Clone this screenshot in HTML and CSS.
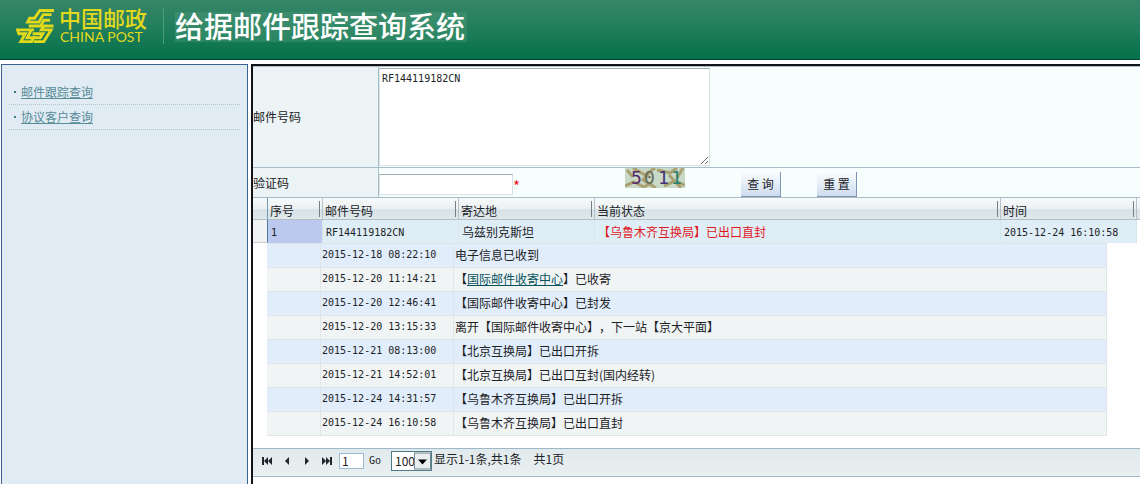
FILE: index.html
```html
<!DOCTYPE html>
<html lang="zh-CN">
<head>
<meta charset="utf-8">
<title>给据邮件跟踪查询系统</title>
<link rel="stylesheet" href="styles.css">
</head>
<body>
<header class="banner">
  <div class="brand">
    <svg class="brand-mark" viewBox="0 0 40 38" aria-hidden="true">
      <g fill="none" stroke="#e2d81c" stroke-width="3">
        <path d="M39 2.500H24.500L19 10.500H14L12 14.500H23.500L28 6.800H36.500"/>
        <path d="M13 18.500H25.500L28.500 12.500H35"/>
        <path d="M38.500 18.500H28.500L26 22.500H36L28.500 34.500H18"/>
        <path d="M18.500 22.500H1.500L3 26.500H9.500L5 34.500H16L18 30.500H11.500L15.500 23"/>
        <path d="M17 26.500H27.500L25 30.500H17"/>
      </g>
    </svg>
    <div class="brand-text">
      <span class="brand-cn">中国邮政</span>
      <span class="brand-en">CHINA POST</span>
    </div>
  </div>
  <h1 class="title">给据邮件跟踪查询系统</h1>
</header>

<div class="page">
  <nav class="sidebar">
    <ul class="menu">
      <li class="menu-item"><a href="#">邮件跟踪查询</a></li>
      <li class="menu-item"><a href="#">协议客户查询</a></li>
    </ul>
  </nav>

  <main class="main">
    <form class="query">
      <div class="query-row query-row-tall">
        <label class="query-label" for="mailno">邮件号码</label>
        <div class="query-field"><textarea class="mono mail-box" id="mailno">RF144119182CN</textarea></div>
      </div>
      <div class="query-row">
        <label class="query-label" for="code">验证码</label>
        <div class="query-field">
          <input class="code-box" id="code" type="text"><span class="required">*</span>
          <svg class="captcha" viewBox="0 0 60 20" role="img" aria-label="5011">
            <rect width="60" height="20" fill="#c9d9c8"/>
            <g fill="none" stroke="#aaa070" stroke-width="3">
              <path d="M8 0L20 7L30 0M24 5L18 12L31 20M0 18L9 14L19 19L27 14"/>
              <path d="M32 2L45 5L52 0M44 7L56 20M39 18L50 13L60 17M58 0L52 10M2 2L8 9"/>
            </g>
            <g class="captcha-text">
              <text x="6" y="16" fill="#552c68">5</text>
              <text x="19" y="16" fill="#626b58">0</text>
              <text x="33" y="16" fill="#443078">1</text>
              <text x="46" y="16" fill="#258474">1</text>
            </g>
          </svg>
          <button class="btn" type="button">查 询</button>
          <button class="btn btn-reset" type="reset">重 置</button>
        </div>
      </div>
    </form>

    <table class="grid">
      <colgroup><col class="c-handle"><col class="c-no"><col class="c-mail"><col class="c-dest"><col class="c-state"><col class="c-time"><col class="c-end"></colgroup>
      <thead>
        <tr><th></th><th>序号</th><th>邮件号码</th><th>寄达地</th><th>当前状态</th><th>时间</th><th></th></tr>
      </thead>
      <tbody>
        <tr>
          <td class="handle"></td>
          <td class="selected mono">1</td>
          <td class="mono">RF144119182CN</td>
          <td>乌兹别克斯坦</td>
          <td class="alert">【乌鲁木齐互换局】已出口直封</td>
          <td class="mono">2015-12-24 16:10:58</td>
          <td class="end"></td>
        </tr>
      </tbody>
    </table>

    <div class="details">
      <table class="trace">
        <colgroup><col class="t-blank"><col class="t-time"><col></colgroup>
        <tbody>
          <tr><td></td><td class="mono">2015-12-18 08:22:10</td><td>电子信息已收到</td></tr>
          <tr><td></td><td class="mono">2015-12-20 11:14:21</td><td>【<a href="#">国际邮件收寄中心</a>】已收寄</td></tr>
          <tr><td></td><td class="mono">2015-12-20 12:46:41</td><td>【国际邮件收寄中心】已封发</td></tr>
          <tr><td></td><td class="mono">2015-12-20 13:15:33</td><td>离开【国际邮件收寄中心】，下一站【京大平面】</td></tr>
          <tr><td></td><td class="mono">2015-12-21 08:13:00</td><td>【北京互换局】已出口开拆</td></tr>
          <tr><td></td><td class="mono">2015-12-21 14:52:01</td><td>【北京互换局】已出口互封(国内经转)</td></tr>
          <tr><td></td><td class="mono">2015-12-24 14:31:57</td><td>【乌鲁木齐互换局】已出口开拆</td></tr>
          <tr><td></td><td class="mono">2015-12-24 16:10:58</td><td>【乌鲁木齐互换局】已出口直封</td></tr>
        </tbody>
      </table>
    </div>

    <div class="pager">
      <button class="nav-btn" type="button" aria-label="首页"><svg viewBox="0 0 10 8"><path d="M0 0h2v8H0zM6 0v8L2 4zM10 0v8L6 4z"/></svg></button>
      <button class="nav-btn" type="button" aria-label="上一页"><svg viewBox="0 0 10 8"><path d="M7 0v8L3 4z"/></svg></button>
      <button class="nav-btn" type="button" aria-label="下一页"><svg viewBox="0 0 10 8"><path d="M3 0v8l4-4z"/></svg></button>
      <button class="nav-btn" type="button" aria-label="末页"><svg viewBox="0 0 10 8"><path d="M0 0v8l4-4zM4 0v8l4-4zM8 0h2v8H8z"/></svg></button>
      <input class="page-box" type="text" value="1" aria-label="页码">
      <button class="go mono" type="button">Go</button>
      <span class="size-wrap">
        <select class="size-box" aria-label="每页条数"><option>100</option></select>
        <svg class="size-arrow" viewBox="0 0 17 17" aria-hidden="true"><rect x=".5" y=".5" width="16" height="16" fill="#e9eef0" stroke="#74868e"/><path d="M4 7h9l-4.500 5z"/></svg>
      </span>
      <span class="summary">显示1-1条,共1条　共1页</span>
    </div>
  </main>
</div>
</body>
</html>
```
FILE: styles.css
```css
* {
  box-sizing: border-box;
}

body {
  margin: 0;
  min-height: 100vh;
  display: flex;
  flex-direction: column;
  background: #fff;
  color: #1c2226;
  font: 12px/16px "Noto Sans CJK SC", sans-serif;
  text-spacing-trim: space-all;
}

button, input, textarea, select {
  font: inherit;
  color: inherit;
  border-radius: 0;
}

.mono,
textarea.mono {
  font-family: "DejaVu Sans Mono", monospace;
  font-size: 10px;
}

/* Banner */
.banner {
  display: flex;
  align-items: flex-start;
  height: 60px;
  background: linear-gradient(#358669, #24805e 40%, #04714b);
  border-bottom: 1px solid #04452f;
}

.brand {
  display: flex;
  gap: 4px;
  width: 164px;
  height: 36px;
  margin-top: 8px;
  padding-left: 16px;
  border-right: 1px solid #4b9e7d;
  color: #e2d81c;
}

.brand-mark {
  width: 39px;
  height: 37px;
}

.brand-text {
  display: flex;
  flex-direction: column;
  gap: 4px;
}

.brand-cn {
  font-size: 22px;
  font-weight: 500;
  line-height: 18px;
}

.brand-en {
  padding-left: 1px;
  font: 14px/14px Lato, sans-serif;
  white-space: nowrap;
}

.title {
  margin: 12px 0 0 11px;
  padding: 0 2px 4px 0;
  background: rgba(96, 164, 132, 0.3);
  color: #fff;
  font-size: 29px;
  font-weight: 500;
  line-height: 26px;
}

/* Columns */
.page {
  flex: 1;
  display: flex;
  gap: 3px;
  padding: 4px 0 0 1px;
}

.sidebar {
  flex: 0 0 247px;
  padding: 15px 7px;
  background: #e1ebf4;
  border: 1px solid #3a6394;
  border-bottom: 0;
}

.menu {
  margin: 0;
  padding: 0;
  list-style: none;
}

.menu-item {
  display: flex;
  align-items: center;
  gap: 5px;
  height: 25px;
  padding-left: 5px;
  border-bottom: 1px dotted #b4c3cb;
}

.menu-item::before {
  content: "";
  width: 2px;
  height: 2px;
  background: #3c7d80;
}

.menu-item a {
  color: #568b98;
}

.main {
  flex: 1;
  min-width: 0;
  border: solid #111318;
  border-width: 2px 0 0 2px;
}

/* Query form */
.query {
  border-top: 1px solid #b0bec8;
}

.query-row {
  display: flex;
  height: 30px;
  border-bottom: 1px solid #a9bdc9;
}

.query-row-tall {
  height: 101px;
}

.query-label {
  display: flex;
  align-items: center;
  flex: 0 0 126px;
  background: #ebf3f4;
  border-right: 1px solid #a9bdc9;
}

.query-field {
  flex: 1;
  display: flex;
  align-items: flex-start;
  background: #f7fffe;
}

.mail-box {
  width: 331px;
  height: 98px;
  margin-top: 1px;
  padding: 2px;
  background: #fff;
  border: 1px solid #d8e1e6;
  border-top-color: #a5adb3;
  line-height: 16px;
}

.code-box {
  width: 134px;
  height: 21px;
  margin-top: 6px;
  border: 1px solid #d8e1e6;
  border-top-color: #a5adb3;
  background: #fff;
}

.required {
  width: 112px;
  margin-top: 10px;
  color: #e8151b;
  font-size: 15px;
}

.captcha {
  width: 60px;
  height: 20px;
}

.captcha-text {
  font: 18px "DejaVu Sans Mono", monospace;
  stroke-width: 0;
}

.btn {
  width: 40px;
  height: 25px;
  margin: 4px 0 0 56px;
  padding: 0;
  background: linear-gradient(#fafdff, #cddcee);
  border: solid #8296b4;
  border-width: 0 1px 1px 0;
  white-space: nowrap;
}

.btn-reset {
  margin-left: 36px;
}

/* Result grid */
table {
  border-collapse: separate;
  border-spacing: 0;
  table-layout: fixed;
  text-align: left;
}

th, td {
  padding: 0;
  white-space: nowrap;
}

.grid {
  width: 100%;
}

.c-handle { width: 15px; }
.c-no { width: 55px; }
.c-mail, .c-dest, .c-time { width: 136px; }
.c-end { width: 3px; }

.grid th {
  height: 22px;
  padding: 4px 0 0 2px;
  background: linear-gradient(#f7fafa, #ebf0f1 54%, #d7e2e7 55%, #dfe8eb);
  border-right: 1px solid #b9c2c7;
  border-bottom: 1px solid #b5bec3;
  font-weight: 400;
  line-height: 16px;
}

.grid th:nth-child(n+2):nth-child(-n+6) {
  background:
    linear-gradient(#737f86, #737f86) right 2px top 3px / 1px 16px no-repeat,
    linear-gradient(#f7fafa, #ebf0f1 54%, #d7e2e7 55%, #dfe8eb);
}

.grid th:first-child {
  border-right-color: #6c9cb8;
}

.grid th:last-child {
  border-right: 0;
}

.grid td {
  height: 23px;
  padding: 0 0 0 3px;
  background: #dfeef6;
  border-right: 1px solid #d8e6ee;
}

.grid td.mono {
  padding-top: 2px;
}

.grid td.handle {
  background: #f0f2f3;
  border-right-color: #4e7da2;
  border-bottom: 1px solid #c7cdd1;
}

.grid td.selected {
  background: #bac9ed;
}

.grid td.alert {
  color: #df1620;
}

.grid td.end {
  background: #fff;
  border: 0;
}

/* Trace rows */
.details {
  padding: 0 33px 12px 14px;
}

.trace {
  width: 100%;
  border-top: 1px solid #dfe4e8;
}

.t-blank { width: 54px; }
.t-time { width: 133px; }

.trace td {
  height: 24px;
  padding: 0 0 1px 1px;
  background: #f0f4f5;
  border-right: 1px solid #dfe5e9;
  border-bottom: 1px solid #dfe5e9;
}

.trace tr:nth-child(odd) td {
  background: #e1edfa;
}

.trace a {
  color: #06535c;
}

/* Pager */
.pager {
  display: flex;
  align-items: center;
  height: 29px;
  padding: 0 0 4px 8px;
  background: linear-gradient(#e0e9ec, #e9f0f1);
  border: solid #9fb8c7;
  border-width: 1px 0;
}

.nav-btn {
  width: 20px;
  height: 16px;
  padding: 0 1px;
  background: none;
  border: 0;
  text-align: left;
}

.nav-btn svg {
  display: block;
  width: 10px;
  height: 8px;
  fill: #20272b;
}

.page-box {
  width: 25px;
  height: 16px;
  margin: 0 4px 0 -2px;
  padding: 0 2px;
  background: #fff;
  border: 1px solid #9dbbd0;
}

.go {
  width: 14px;
  margin-right: 9px;
  padding: 0;
  background: none;
  border: 0;
}

.size-wrap {
  display: grid;
  align-items: center;
  width: 41px;
}

.size-box,
.size-arrow {
  grid-area: 1 / 1;
}

.size-box {
  width: 41px;
  height: 20px;
  padding: 0 3px;
  appearance: none;
  background: #fff;
  border: 1px solid #507b89;
}

.size-arrow {
  justify-self: end;
  width: 17px;
  height: 18px;
  margin-right: 1px;
  pointer-events: none;
}

.summary {
  padding: 0 0 4px 2px;
  white-space: nowrap;
}
```
